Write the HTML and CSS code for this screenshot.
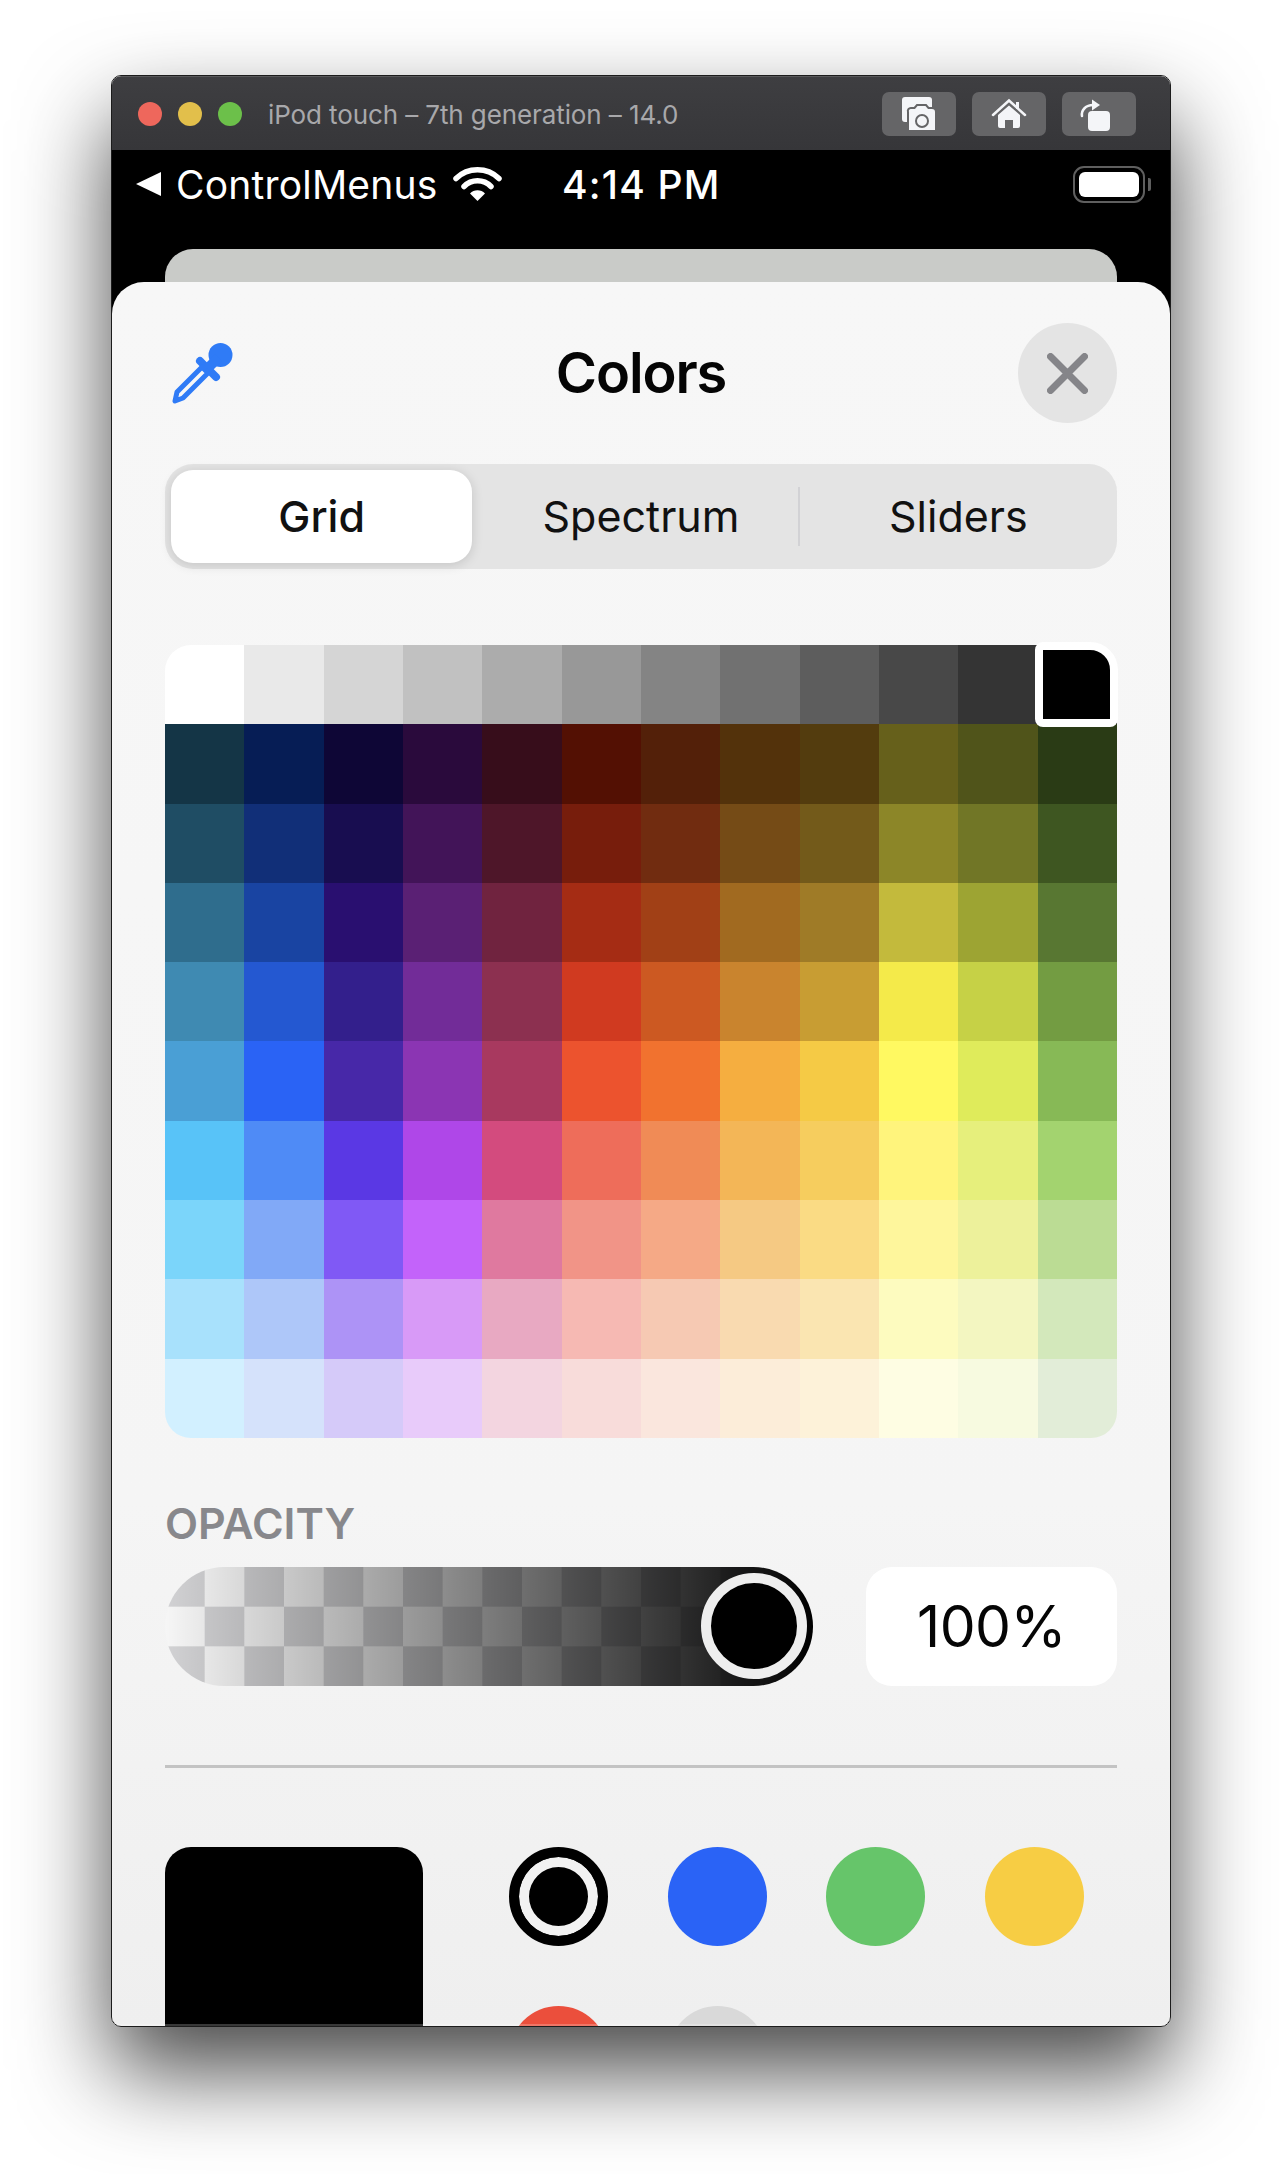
FILE: index.html
```html
<!DOCTYPE html>
<html lang="en">
<head>
    <meta charset="UTF-8">
    <meta name="viewport" content="width=device-width, initial-scale=1.0">
    <title>Colors</title>
    <link rel="stylesheet" href="styles.css">
</head>
<body>

    <div class="window">
        <div class="titlebar">
            <span class="light light-red"></span>
            <span class="light light-yellow"></span>
            <span class="light light-green"></span>
            <span class="device-name">iPod touch – 7th generation – 14.0</span>
            <div class="sim-buttons">
                <div class="sim-button">
                    <svg width="74" height="44" viewBox="0 0 74 44">
                        <rect x="20" y="5" width="30" height="25" rx="3" fill="#f4f5f8"/>
                        <path d="M29 16h3.500l2.500-3h9l2.500 3h3.500a4 4 0 0 1 4 4v19h-28v-19a3 3 0 0 1 3-4z" fill="#f4f5f8" stroke="#656567" stroke-width="2"/>
                        <circle cx="40" cy="29" r="6" fill="none" stroke="#656567" stroke-width="2"/>
                    </svg>
                </div>
                <div class="sim-button">
                    <svg width="74" height="44" viewBox="0 0 74 44">
                        <path d="M21 23 37 8.500 53 23" fill="none" stroke="#f4f5f8" stroke-width="2.500" stroke-linecap="round"/>
                        <path d="M44 10h3v7h-3z" fill="#f4f5f8"/>
                        <path d="M37 13.500 48 23v11a2 2 0 0 1-2 2h-5v-8h-8v8h-5a2 2 0 0 1-2-2v-11z" fill="#f4f5f8"/>
                    </svg>
                </div>
                <div class="sim-button">
                    <svg width="74" height="44" viewBox="0 0 74 44">
                        <rect x="26" y="19" width="22" height="20" rx="4" fill="#f4f5f8"/>
                        <path d="M20 24c-1-6 4-11 11-11" fill="none" stroke="#f4f5f8" stroke-width="2.500" stroke-linecap="round"/>
                        <path d="M30 7.500 38 13l-8 5.500z" fill="#f4f5f8"/>
                    </svg>
                </div>
            </div>
        </div>

        <div class="screen">
            <div class="statusbar">
                <span class="back-arrow"></span>
                <span class="back-label">ControlMenus</span>
                <svg class="wifi" width="49" height="35" viewBox="0 0 49 35">
                    <path d="M3 12.500a31 31 0 0 1 43 0" fill="none" stroke="#fff" stroke-width="5.500" stroke-linecap="round"/>
                    <path d="M11 20.500a19 19 0 0 1 27 0" fill="none" stroke="#fff" stroke-width="5.500" stroke-linecap="round"/>
                    <path d="M24.500 35 17 27.500a10.500 10.500 0 0 1 15 0z" fill="#fff"/>
                </svg>
                <span class="clock">4:14 PM</span>
                <div class="battery"><span class="battery-level"></span></div>
                <span class="battery-nub"></span>
            </div>
            <div class="back-card"></div>

            <div class="sheet">
                <div class="sheet-header">
                    <svg class="dropper" width="62" height="61" viewBox="0 0 62 61">
                        <circle cx="49.500" cy="12" r="12" fill="#2f7bf6"/>
                        <path d="M29 18 45 34" stroke="#2f7bf6" stroke-width="8" stroke-linecap="round"/>
                        <path d="M44 11 31 24l7 7 13-13z" fill="#2f7bf6"/>
                        <path d="M6 49 31 24l6 6-25 25-8 3z" fill="none" stroke="#2f7bf6" stroke-width="5" stroke-linejoin="round"/>
                    </svg>
                    <h1 class="sheet-title">Colors</h1>
                    <div class="close-button">
                        <svg width="41" height="41" viewBox="0 0 41 41">
                            <path d="M3.500 3.500l34 34M37.500 3.500l-34 34" stroke="#858589" stroke-width="7" stroke-linecap="round"/>
                        </svg>
                    </div>
                </div>

                <div class="segments">
                    <div class="segment segment-active">Grid</div>
                    <div class="segment">Spectrum</div>
                    <div class="segment segment-split">Sliders</div>
                </div>

                <div class="grid-wrap">
                    <div class="color-grid" id="colorGrid"></div>
                    <div class="grid-selected"></div>
                </div>

                <div class="opacity-label">OPACITY</div>
                <div class="opacity-row">
                    <div class="slider"><span class="slider-thumb"></span></div>
                    <div class="opacity-value">100%</div>
                </div>

                <hr class="divider">

                <div class="swatches">
                    <div class="current-swatch"></div>
                    <div class="saved-colors">
                        <span class="dot dot-black"></span>
                        <span class="dot dot-blue"></span>
                        <span class="dot dot-green"></span>
                        <span class="dot dot-yellow"></span>
                        <span class="dot dot-red"></span>
                        <span class="dot dot-gray"></span>
                    </div>
                </div>
            </div>
        </div>
    </div>

    <script>
        // One line per row of the picker, top to bottom
        const rows = [
            "#ffffff #e9e9e9 #d5d5d5 #c1c1c1 #acacac #989898 #848484 #717171 #5d5d5d #484848 #343434 #000000",
            "#143546 #061d55 #0e0636 #2a0a3c #370d1b #531003 #532009 #53320b #533c0e #66601b #50541a #2a3b15",
            "#1f4d64 #112f78 #180d50 #421458 #4e1629 #771d0c #712c10 #754b16 #735a1a #8c8628 #717626 #3e5621",
            "#2f6d8d #1944a2 #290f70 #5a2074 #70233f #a52c14 #a14016 #a16a20 #9f7b27 #c3ba3c #9da433 #587732",
            "#3f8ab2 #2458d1 #331f8c #722c98 #8c3050 #d03a20 #cc5922 #c9842e #c89d33 #f4ea4a #c6d146 #739c42",
            "#4a9fd5 #2a63f5 #4728a8 #8b35b3 #a8395f #ec532e #f1722f #f5ae40 #f5ca45 #fff961 #dfeb5b #87b956",
            "#58c3f8 #4f8bf6 #5a38e4 #af47e8 #d34b7e #ee6d5a #f08b56 #f3b657 #f6cd5e #fff47c #e6ef7c #a3d36f",
            "#7bd5fa #81a9f7 #8059f5 #c363fa #df799f #f19487 #f5a986 #f5c983 #fadb84 #fef69c #edf19b #bbdc94",
            "#a8e1fc #aec7f9 #ad93f6 #d89af7 #e8a9c2 #f6b9b3 #f6c9b3 #f9dab0 #fae5b1 #fdfbbf #f3f6c1 #d3e8bb",
            "#d2f0ff #d5e2fb #d5caf9 #e8cbfa #f3d5e0 #f8dcda #fae6dd #fcedd9 #fdf2d9 #fefde3 #f7fae0 #e2edd8"
        ];

        const grid = document.getElementById("colorGrid");
        rows.forEach(function (row) {
            row.split(" ").forEach(function (color) {
                const cell = document.createElement("span");
                cell.style.backgroundColor = color;
                grid.appendChild(cell);
            });
        });
    </script>

</body>
</html>
```

FILE: styles.css
```css
body {
    margin: 0;
    height: 2174px;
    background: #fff;
    font-family: Inter, "Liberation Sans", sans-serif;
    overflow: hidden;
}
.window {
    position: relative;
    box-sizing: border-box;
    width: 1060px;
    height: 1952px;
    margin: 75px 0 0 111px;
    display: flex;
    flex-direction: column;
    border: 1px solid #1c1c1c;
    border-radius: 10px;
    overflow: hidden;
    box-shadow: 0 44px 90px rgba(0, 0, 0, 0.72);
}
.window::after {
    content: "";
    position: absolute;
    left: 0;
    right: 0;
    bottom: 0;
    height: 2px;
    background: rgba(255, 255, 255, 0.22);
}

/* simulator title bar */
.titlebar {
    box-sizing: border-box;
    flex: none;
    height: 74px;
    display: flex;
    align-items: center;
    padding: 0 34px 0 26px;
    background: linear-gradient(#3e3e41, #363639);
    border-top: 1px solid #59595b;
}
.light {
    width: 24px;
    height: 24px;
    border-radius: 50%;
    margin-right: 16px;
}
.light-red { background: #ee675c; }
.light-yellow { background: #e2bf4b; }
.light-green { background: #6cc04a; }
.device-name {
    margin-left: 10px;
    padding-top: 2px;
    font-size: 26px;
    color: #a8a8ab;
    letter-spacing: -0.1px;
}
.sim-buttons {
    margin-left: auto;
    display: flex;
    gap: 16px;
}
.sim-button {
    width: 74px;
    height: 44px;
    border-radius: 7px;
    background: #656567;
}
.sim-button svg {
    display: block;
}

/* iOS screen */
.screen {
    flex: 1;
    min-height: 0;
    display: flex;
    flex-direction: column;
    background: #000;
}
.statusbar {
    flex: none;
    height: 68px;
    margin-bottom: 31px;
    display: flex;
    align-items: center;
    color: #fff;
}
.back-arrow {
    width: 0;
    height: 0;
    margin-left: 24px;
    border-top: 12.5px solid transparent;
    border-bottom: 12.5px solid transparent;
    border-right: 25px solid #fff;
}
.back-label {
    width: 277px;
    margin-left: 15px;
    font-size: 39px;
    letter-spacing: 0.2px;
}
.wifi {
    margin-top: -2px;
}
.clock {
    width: 511px;
    margin-left: 60px;
    font-size: 39px;
    font-weight: 500;
    letter-spacing: 1.2px;
}
.battery {
    box-sizing: border-box;
    width: 72px;
    height: 37px;
    padding: 4px;
    border: 2px solid #5f5f5f;
    border-radius: 11px;
}
.battery-level {
    display: block;
    height: 100%;
    background: #fff;
    border-radius: 6px;
}
.battery-nub {
    width: 3px;
    height: 13px;
    margin-left: 3px;
    background: #5f5f5f;
    border-radius: 0 2px 2px 0;
}
.back-card {
    flex: none;
    height: 33px;
    margin: 0 53px;
    background: #c9cbc8;
    border-radius: 28px 28px 0 0;
}
.sheet {
    flex: 1;
    min-height: 0;
    overflow: hidden;
    padding: 41px 53px 0;
    background: linear-gradient(#f7f7f7, #f5f5f5 70%, #efefef);
    border-radius: 32px 32px 0 0;
}

/* header */
.sheet-header {
    display: grid;
    grid-template-columns: 1fr auto 1fr;
    align-items: center;
    height: 100px;
}
.dropper {
    margin-left: 6px;
    margin-top: 1px;
}
.sheet-title {
    margin: 0;
    font-size: 56px;
    font-weight: 600;
    letter-spacing: -1.1px;
    color: #050505;
}
.close-button {
    justify-self: end;
    width: 99px;
    height: 100px;
    display: flex;
    align-items: center;
    justify-content: center;
    background: #e4e4e4;
    border-radius: 50%;
}

/* segmented control */
.segments {
    display: grid;
    grid-template-columns: repeat(3, 1fr);
    height: 105px;
    margin-top: 41px;
    background: #e4e4e4;
    border-radius: 28px;
}
.segment {
    position: relative;
    display: flex;
    align-items: center;
    justify-content: center;
    padding-bottom: 2px;
    font-size: 43px;
    color: #111;
}
.segment-active {
    margin: 6px 10px 6px 6px;
    background: #fff;
    border-radius: 22px;
    font-weight: 500;
    box-shadow: 0 2px 12px rgba(0, 0, 0, 0.14);
}
.segment-split::before {
    content: "";
    position: absolute;
    left: -2px;
    top: 23px;
    bottom: 23px;
    width: 2px;
    background: #d2d2d5;
}

/* colour grid */
.grid-wrap {
    position: relative;
    margin-top: 76px;
}
.color-grid {
    display: grid;
    grid-template-columns: repeat(12, 1fr);
    grid-auto-rows: 79.3px;
    border-radius: 26px;
    overflow: hidden;
}
.grid-selected {
    position: absolute;
    top: -3px;
    right: -1px;
    box-sizing: border-box;
    width: 83px;
    height: 85px;
    background: #000;
    border: 8px solid #fff;
    border-radius: 8px 28px 8px 8px;
}

/* opacity */
.opacity-label {
    margin-top: 60px;
    margin-bottom: 19px;
    line-height: 50px;
    font-size: 43px;
    font-weight: 600;
    color: #88888c;
}
.opacity-row {
    display: flex;
    gap: 53px;
    height: 119px;
}
.slider {
    position: relative;
    width: 648px;
    border-radius: 60px;
    background-image:
        linear-gradient(to right, rgba(0, 0, 0, 0), #000),
        conic-gradient(#f6f6f6 25%, #d2d2d4 0 50%, #f6f6f6 0 75%, #d2d2d4 0);
    background-size: 100% 100%, 79.33px 79.33px;
}
.slider-thumb {
    position: absolute;
    top: 6px;
    right: 6px;
    box-sizing: border-box;
    width: 106px;
    height: 106px;
    background: #000;
    border: 10px solid #eeeeee;
    border-radius: 50%;
}
.opacity-value {
    flex: 1;
    display: flex;
    align-items: center;
    justify-content: center;
    background: #fff;
    border-radius: 26px;
    font-size: 57px;
    letter-spacing: -0.5px;
    color: #050505;
}
.divider {
    height: 3px;
    margin: 79px 0 0;
    border: none;
    background: #c3c3c3;
}

/* saved colours */
.swatches {
    display: flex;
    margin-top: 79px;
}
.current-swatch {
    flex: none;
    width: 258px;
    height: 300px;
    background: #000;
    border-radius: 26px;
}
.saved-colors {
    margin-left: 86px;
    display: grid;
    grid-template-columns: repeat(4, 99px);
    grid-auto-rows: 99px;
    column-gap: 59.6px;
    row-gap: 60px;
}
.dot {
    box-sizing: border-box;
    border-radius: 50%;
}
.dot-black {
    background: #000;
    border: 10px solid #000;
    box-shadow: inset 0 0 0 10px #f2f2f2;
}
.dot-blue { background: #2a63f6; }
.dot-green { background: #66c56a; }
.dot-yellow { background: #f7cd44; }
.dot-red { background: #eb4f3c; }
.dot-gray { background: #d9d9d9; }
```
